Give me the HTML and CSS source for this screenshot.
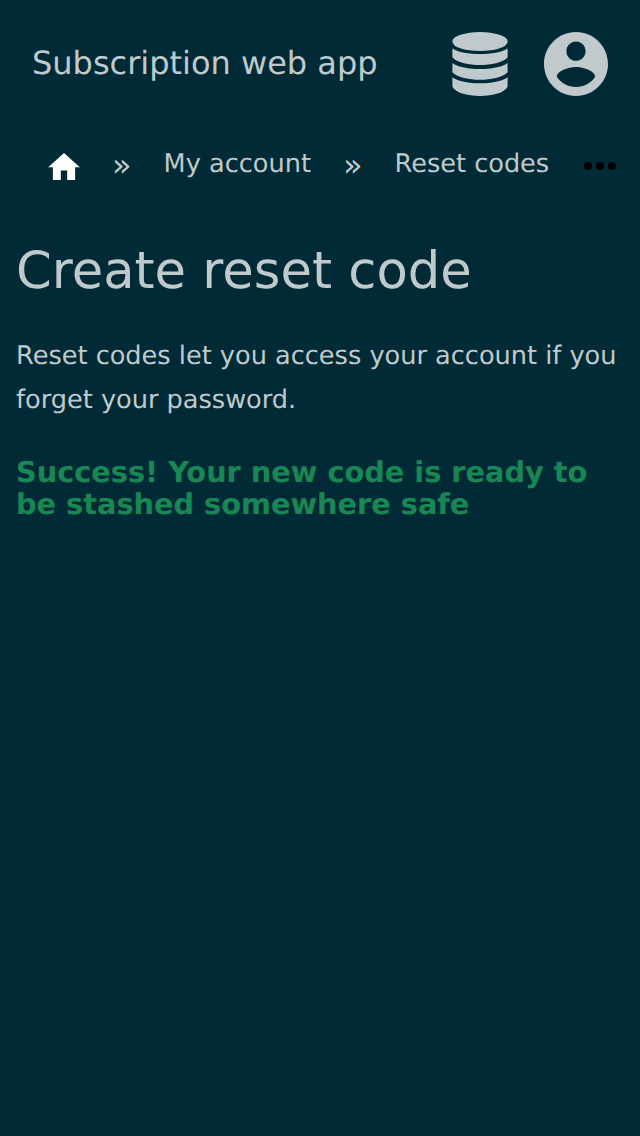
FILE: index.html
```html
<!DOCTYPE html>
<html lang="en">
<head>
<meta charset="utf-8">
<title>Create reset code</title>
<link rel="stylesheet" href="styles.css">
</head>
<body>
<header class="topbar">
  <span class="brand">Subscription web app</span>
  <svg class="icon database" viewBox="0 0 56 64" aria-hidden="true"><ellipse cx="28" cy="9.500" rx="27.700" ry="9.500"/><path d="M.4 16.200C6 20.300 17 22 28 22s22-1.700 27.600-5.800V25.500C50 31 39 33 28 33S6 31 .4 25.500zM.4 31C6 35.200 17 37 28 37s22-1.800 27.600-6V40.300C50 45.800 39 47.800 28 47.800S6 45.800 .4 40.300zM.4 45.300C6 49.500 17 51.300 28 51.300s22-1.800 27.600-6V54.500C53 60.500 41 64 28 64S3 60.500 .4 54.500z"/></svg>
  <svg class="icon account" viewBox="2 2 20 20" aria-hidden="true"><path d="M12 2C6.480 2 2 6.480 2 12s4.480 10 10 10 10-4.480 10-10S17.520 2 12 2zm0 3c1.660 0 3 1.340 3 3s-1.340 3-3 3-3-1.340-3-3 1.340-3 3-3zm0 14.200c-2.500 0-4.710-1.280-6-3.220.03-1.990 4-3.080 6-3.080 1.990 0 5.970 1.090 6 3.080-1.290 1.940-3.500 3.220-6 3.220z"/></svg>
</header>
<nav class="crumbs">
  <svg class="home" viewBox="2 3 20 17" aria-hidden="true"><path d="M10 20v-6h4v6h5v-8h3L12 3 2 12h3v8z"/></svg>
  <span class="sep">»</span>
  <span class="crumb account-crumb">My account</span>
  <span class="sep">»</span>
  <span class="crumb">Reset codes</span>
  <svg class="more" viewBox="0 0 32 8" aria-hidden="true"><circle cx="4" cy="4" r="4"/><circle cx="16" cy="4" r="4"/><circle cx="28" cy="4" r="4"/></svg>
</nav>
<main class="content">
  <h1 class="title">Create reset code</h1>
  <p class="intro">Reset codes let you access your account if you forget your password.</p>
  <p class="success">Success! Your new code is ready to be stashed somewhere safe</p>
</main>
</body>
</html>
```

FILE: styles.css
```css
body { margin: 0; min-height: 100vh; background: #002b36; color: #c0cacc; font-family: "DejaVu Sans", sans-serif; text-rendering: geometricPrecision; }
.topbar { display: flex; align-items: center; height: 128px; padding: 0 32px; box-sizing: border-box; }
.brand { flex: 1; font-size: 32px; line-height: 40px; margin-top: -2px; }
.icon { fill: currentColor; height: 64px; }
.database { width: 56px; margin-right: 36px; }
.account { width: 64px; }
.crumbs { display: flex; align-items: flex-start; height: 88px; padding: 16px 24px 0 48px; box-sizing: border-box; white-space: nowrap; }
.home { width: 32px; height: 27px; margin: 8.500px 32px 0 0; fill: #fff; }
.sep { width: 51.600px; font-size: 32px; line-height: 40px; margin-top: 1px; }
.crumb { font-size: 25.600px; line-height: 40px; }
.account-crumb { margin-right: 32px; }
.more { width: 32px; height: 8px; margin: 18px 0 0 auto; fill: #000; }
.content { padding: 25px 16px 0; }
.title { margin: 0; font-size: 51.200px; line-height: 60px; font-weight: 400; }
.intro { margin: 33px 0 0; font-size: 25.600px; line-height: 44px; }
.success { margin: 34px 0 0; color: #198754; font-size: 28.780px; line-height: 32px; font-weight: 700; }
```
